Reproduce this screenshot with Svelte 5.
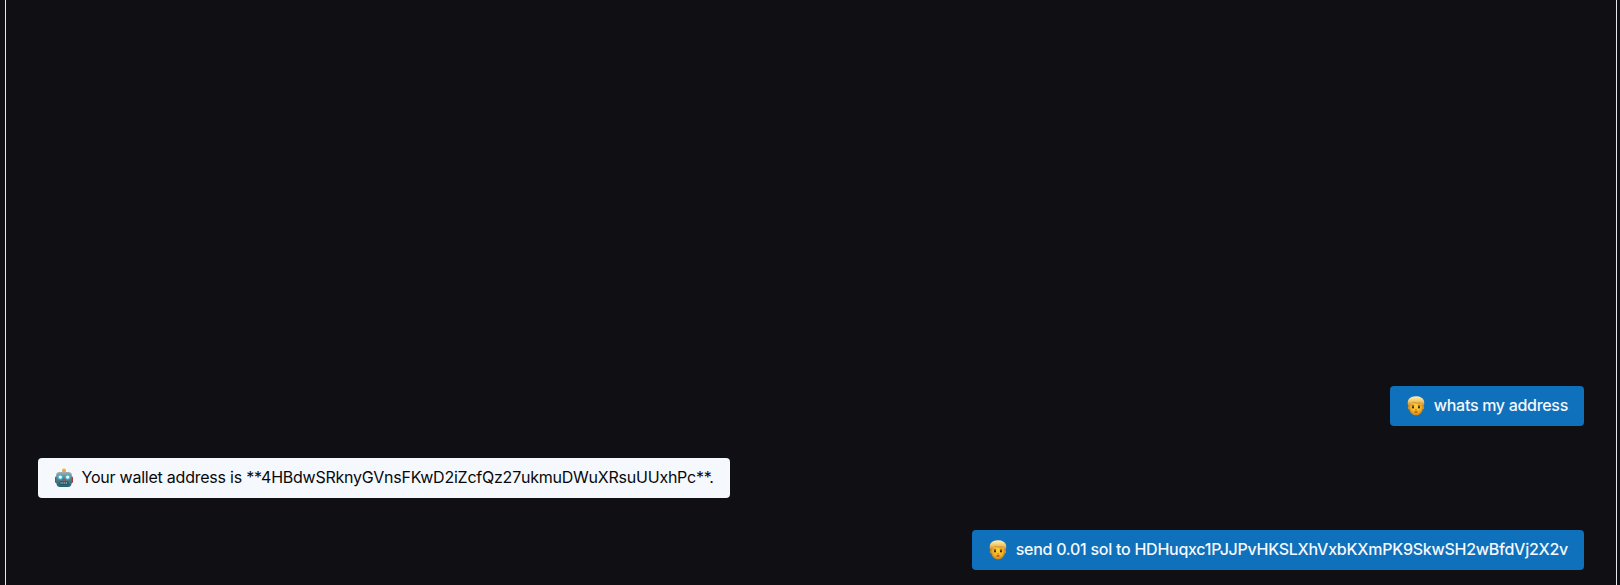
<script>
  const messages = [
    { from: 'user', text: 'whats my address', spacing: -0.3 },
    { from: 'bot', text: 'Your wallet address is **4HBdwSRknyGVnsFKwD2iZcfQz27ukmuDWuXRsuUUxhPc**.', spacing: -0.23 },
    { from: 'user', text: 'send 0.01 sol to HDHuqxc1PJJPvHKSLXhVxbKXmPK9SkwSH2wBfdVj2X2v', spacing: -0.26 }
  ];
</script>

<main class="chat">
  {#each messages as m}
    <div class="bubble {m.from}">
      {#if m.from === 'user'}
        <svg class="face" viewBox="0 0 18 20" aria-hidden="true">
          <defs>
            <radialGradient id="skin" cx=".5" cy=".45" r=".6"><stop offset="0" stop-color="#ffd03c" /><stop offset=".6" stop-color="#f7b526" /><stop offset="1" stop-color="#b87418" /></radialGradient>
            <linearGradient id="hair" x2="0" y2="1"><stop stop-color="#fff0b8" /><stop offset=".45" stop-color="#f4c765" /><stop offset="1" stop-color="#a86f22" /></linearGradient>
          </defs>
          <ellipse cx="2.100" cy="11.500" rx="1.200" ry="2" fill="#dc9822" />
          <ellipse cx="15.900" cy="11.500" rx="1.200" ry="2" fill="#dc9822" />
          <path d="M2 7Q2 2 9 2t7 5v4.500c0 4.800-3.500 8-7 8s-7-3.200-7-8z" fill="url(#skin)" />
          <path d="M1.500 11.500Q-.2 6 1.700 3.300 4 0 9.500.2 15 .5 16.800 4.200 17.800 7 16.500 11.500L15.400 9.800Q15 8 13.800 6.900 9.500 8 5.600 6.200 5 8.500 2.800 9.500z" fill="url(#hair)" />
          <path d="M5.600 6.200Q9.500 8 13.800 6.900" stroke="#b97924" stroke-width=".6" fill="none" />
          <path d="M4.600 9.700q1.300-1 2.600-.2M10.800 9.500q1.300-.8 2.600.2" stroke="#7d4310" stroke-width=".75" fill="none" />
          <ellipse cx="6" cy="11.300" rx="1" ry="1.200" fill="#3b261b" />
          <ellipse cx="12" cy="11.300" rx="1" ry="1.200" fill="#3b261b" />
          <path d="M8 13.700q1 .7 2 0" stroke="#b36a0c" stroke-width=".8" fill="none" />
          <path d="M6.800 15.700q2.200-.7 4.400 0-2.200 2-4.400 0" fill="#a6401b" />
        </svg>
      {:else}
        <svg class="robot" viewBox="0 0 18 20" aria-hidden="true">
          <defs><linearGradient id="steel" x2="0" y2="1"><stop stop-color="#a4afb4" /><stop offset=".45" stop-color="#50848e" /><stop offset="1" stop-color="#206270" /></linearGradient></defs>
          <rect x="0" y="8.500" width="3" height="6.500" rx="1.200" fill="#a03d3e" />
          <rect x="15" y="8.500" width="3" height="6.500" rx="1.200" fill="#a03d3e" />
          <path d="M6 4.500q3-2.400 6 0z" fill="#bd6658" />
          <circle cx="9" cy="2.300" r="1.900" fill="#f2aa35" />
          <path d="M1.200 7Q1.200 3.900 4.700 3.900h8.600q3.500 0 3.500 3.100v7.300q0 4.700-4 4.700H5.200q-4 0-4-4.700z" fill="url(#steel)" />
          <circle cx="5.300" cy="9" r="2.700" fill="#3ab3cc" />
          <circle cx="12.700" cy="9" r="2.700" fill="#3ab3cc" />
          <circle cx="5.300" cy="9.100" r="1.700" fill="#e9ffff" />
          <circle cx="12.700" cy="9.100" r="1.700" fill="#e9ffff" />
          <path d="M9 9.800l1.400 2.700H7.600z" fill="#da3932" />
          <rect x="4.500" y="13.500" width="9" height="3" rx="1.200" fill="#1f4955" />
          <path d="M5.500 15h7" stroke="#c3d4d6" stroke-width="1.300" stroke-dasharray="1 .9" />
        </svg>
      {/if}
      <span style:letter-spacing="{m.spacing}px">{m.text}</span>
    </div>
  {/each}
</main>

<style>
  :global(body) { background: #100f14; }
  .chat {
    box-sizing: border-box;
    height: 585px;
    margin: 0 3px 0 5px;
    padding: 0 32px 15px;
    border: solid #e4e6ee;
    border-width: 0 1px;
    display: flex;
    flex-direction: column;
    justify-content: flex-end;
    gap: 32px;
    overflow: hidden;
    font: 16px/24px Inter, sans-serif;
  }
  .bubble {
    display: flex;
    align-items: center;
    box-sizing: border-box;
    height: 40px;
    padding: 8px 16px;
    border-radius: 4px;
    white-space: nowrap;
  }
  .bubble span { padding-bottom: 2px; }
  .user { align-self: flex-end; background: #0f70bb; color: #f5f9fd; font-weight: 500; }
  .bot { align-self: flex-start; background: #f5f9fd; color: #08080c; }
  svg { flex: none; height: 20px; width: 18px; margin: 0 8.5px 1px 1px; }
  .face { margin: 0 8.5px 1px 1.5px; }
</style>
